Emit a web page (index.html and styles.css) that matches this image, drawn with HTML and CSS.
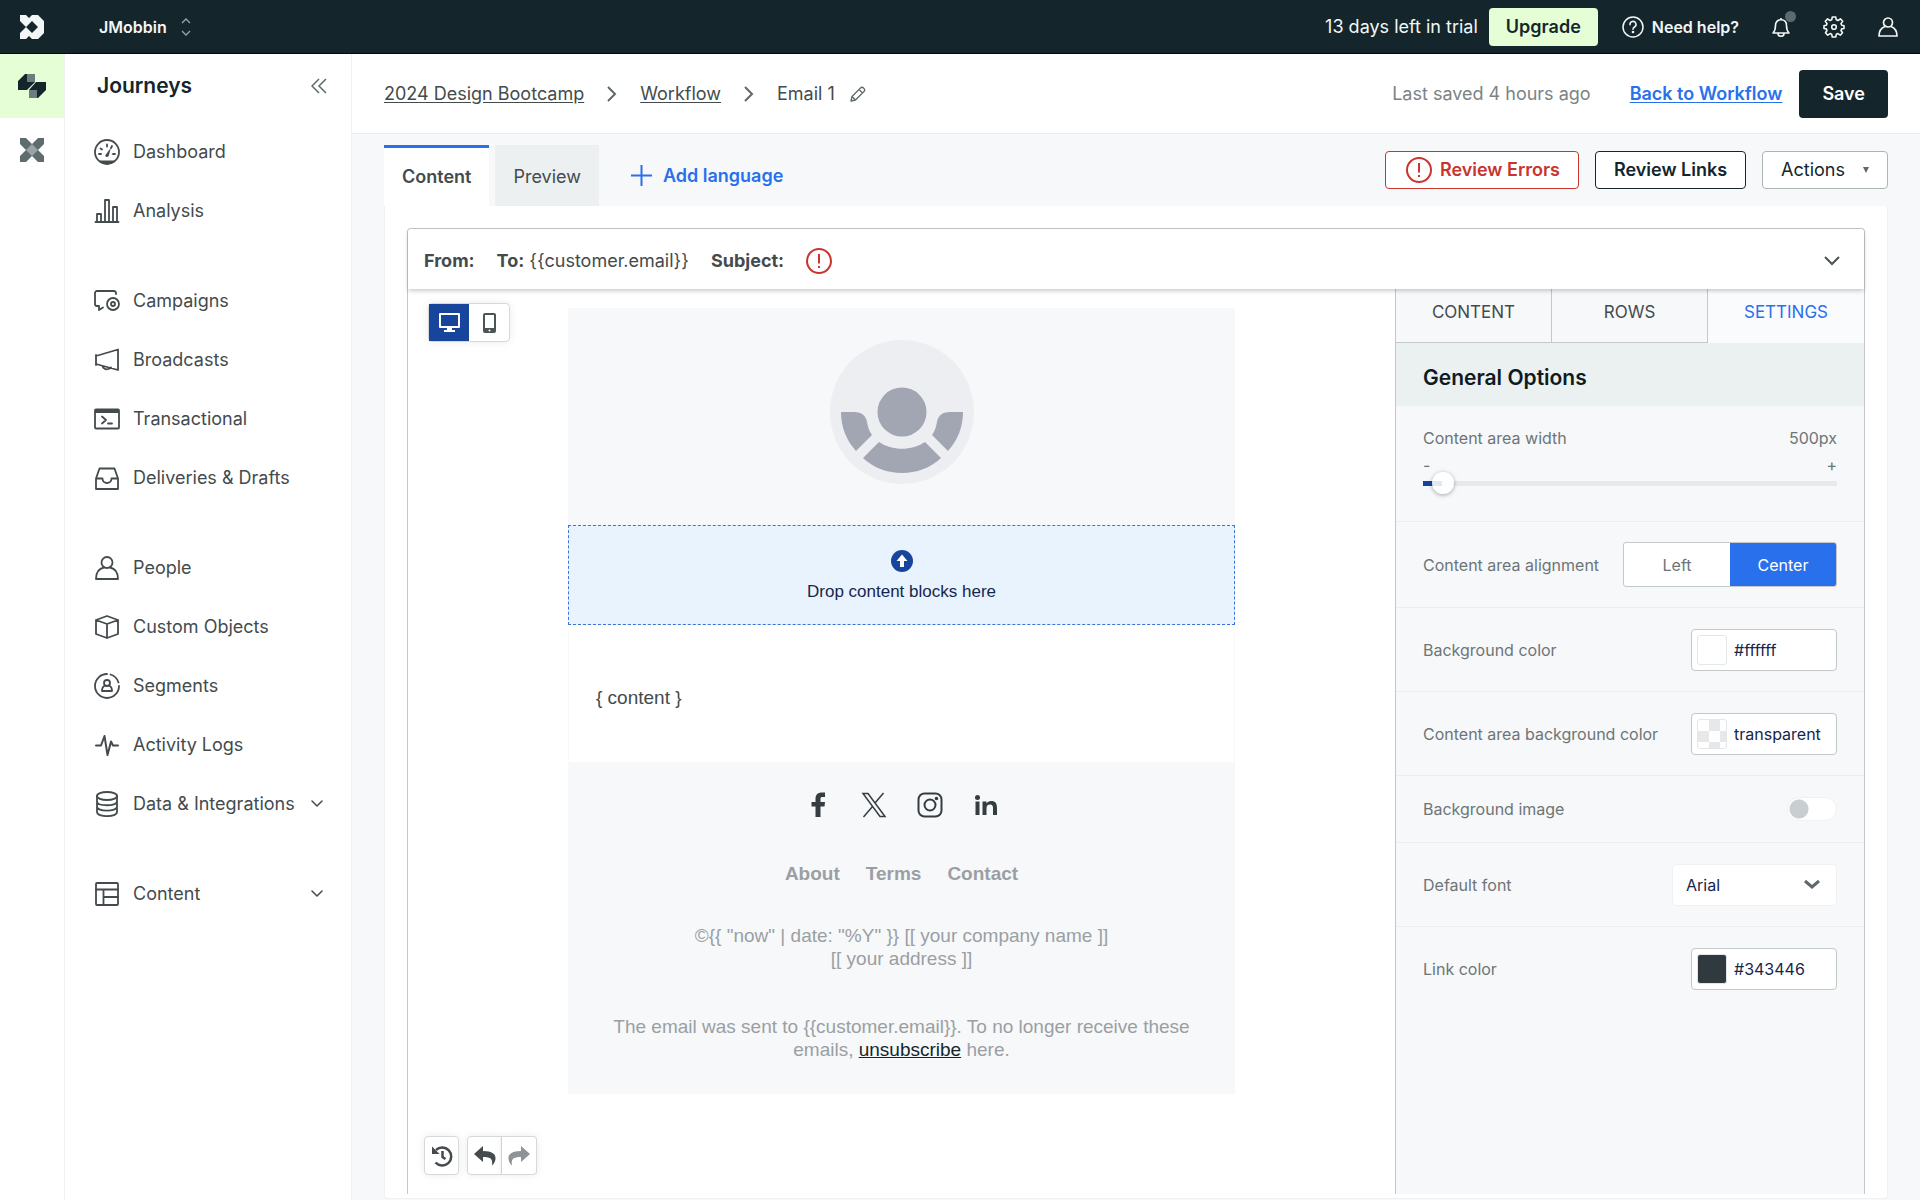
FILE: index.html
```html
<!DOCTYPE html>
<html lang="en">
    <head>
        <meta charset="utf-8">
        <meta name="viewport" content="width=device-width, initial-scale=1">
        <title>Email 1 - Journeys</title>
        <link rel="stylesheet" href="styles.css">
    </head>
    <body>
        <!-- Top bar -->
        <header class="topbar">
            <a class="logo" href="#" aria-label="Home">
                <svg width="24" height="24" viewBox="0 0 24 24"><path fill="#f3f6f6" fill-rule="evenodd" d="M0 0H6L9 3 12 0H18L24 6V18L18 24H12L9 21 6 24H0V18L6 12 0 6ZM12 6 6 12 12 18 18 12Z"/></svg>
            </a>
            <button class="workspace">JMobbin
                <svg width="10" height="18" viewBox="0 0 10 18" fill="none" stroke="#9aa5a7" stroke-width="1.300"><path d="M1 5 5 1 9 5M1 13 5 17 9 13"/></svg>
            </button>
            <div class="topbar-right">
                <span>13 days left in trial</span>
                <button class="upgrade">Upgrade</button>
                <button class="help">
                    <svg width="22" height="22" viewBox="0 0 22 22" fill="none" stroke="currentColor" stroke-width="1.500"><circle cx="11" cy="11" r="10"/><path d="M8 8.700A3 3 0 1 1 12.500 11C11.400 11.600 11 12.200 11 13.300" stroke-linecap="round"/><circle cx="11" cy="16" r=".6" fill="currentColor"/></svg>
                    Need help?
                </button>
                <button class="icon-button notifications" aria-label="Notifications">
                    <svg width="18" height="20" viewBox="0 0 18 20" fill="none" stroke="currentColor" stroke-width="1.600" stroke-linejoin="round"><path d="M1 16C3 14 3.500 12 3.500 8.500 3.500 5 5.500 2.800 9 2.800S14.500 5 14.500 8.500C14.500 12 15 14 17 16ZM9 2.800V1M6 16.500A3 2.800 0 0 0 12 16.500"/></svg>
                    <span class="dot"></span>
                </button>
                <button class="icon-button" aria-label="Settings">
                    <svg width="22" height="22" viewBox="0 0 22 22" fill="none" stroke="currentColor" stroke-width="1.600" stroke-linejoin="round"><path d="M9.300 1H12.700L13.300 3.800 15 4.500 17.400 2.900 19.700 5.200 18 7.600 18.700 9.300 21 9.800V12.500L18.700 12.900 18 14.500 19.500 16.800 17.300 19.200 14.900 17.600 13.300 18.300 12.700 21H9.300L8.700 18.300 7.100 17.600 4.700 19.200 2.500 16.800 4 14.500 3.300 12.900 1 12.500V9.800L3.300 9.300 4 7.600 2.300 5.200 4.600 2.900 7 4.500 8.700 3.800Z"/><circle cx="11" cy="11" r="2.300"/></svg>
                </button>
                <button class="icon-button" aria-label="Account">
                    <svg width="20" height="20" viewBox="0 0 20 20" fill="none" stroke="currentColor" stroke-width="1.700" stroke-linejoin="round"><circle cx="10" cy="5.500" r="4.500"/><path d="M7 9.500C3 11 1 14 1 19H19C19 14 17 11 13 9.500"/></svg>
                </button>
            </div>
        </header>

        <div class="layout">
            <!-- Product switcher -->
            <nav class="rail" aria-label="Products">
                <a class="rail-link active" href="#" aria-label="Journeys">
                    <svg width="28" height="25" viewBox="0 0 28 25"><path fill="#14262b" d="M0 7 7 0H9V8H17L9 16H0ZM18 8H28V16L20 24H19V16H11Z"/><path fill="#6e7c7d" d="M9 0H17V8H9ZM11 16H19V24H11Z"/></svg>
                </a>
                <a class="rail-link" href="#" aria-label="Data Pipelines">
                    <svg width="24" height="24" viewBox="0 0 24 24"><path fill="#5f6c6e" d="M0 0H6L12 6 18 0H24V6L18 12 24 18V24H18L12 18 6 24H0V18L6 12 0 6Z"/><path fill="#9aa4a4" d="M12 6 18 12 12 18 6 12Z"/></svg>
                </a>
            </nav>

            <!-- Sidebar -->
            <aside class="sidebar">
                <div class="sidebar-title">
                    <h2>Journeys</h2>
                    <button class="icon-button" aria-label="Collapse menu">
                        <svg width="16" height="16" viewBox="0 0 16 16" fill="none" stroke="#5f686a" stroke-width="1.500"><path d="M8 1 1 8 8 15M15 1 8 8 15 15"/></svg>
                    </button>
                </div>
                <nav class="menu" aria-label="Journeys">
                    <div class="menu-group">
                        <a href="#"><svg viewBox="0 0 26 26"><circle cx="13" cy="13" r="12"/><path class="fill" d="M5 21.500H21L17 25H9ZM11.500 16 17 8.500 14.500 17.500C12.500 18.500 10.500 17.500 11.500 16Z"/><path d="M5 15H7M19 15H21M6.500 9.500 8 10.500M13 5.500V7.500M18 7 17 9"/></svg>Dashboard</a>
                        <a href="#"><svg viewBox="0 0 26 26"><path d="M1.500 24H24.500M3 24V16H7V24M11 24V2H15V24M19 24V9H23V24"/></svg>Analysis</a>
                    </div>
                    <div class="menu-group">
                        <a href="#"><svg viewBox="0 0 26 26"><path d="M22 6V5A2 2 0 0 0 20 3H3A2 2 0 0 0 1 5V16A2 2 0 0 0 3 18H5V22L9 19.500"/><circle cx="19" cy="16" r="6"/><circle cx="19" cy="16" r="2"/></svg>Campaigns</a>
                        <a href="#"><svg viewBox="0 0 26 26"><path d="M24 2.500V23L2 17V9L24 2.500ZM2 8V18M8.500 19C9 21.500 12 23 14 22 15.500 21.500 16.500 21 17 20.500"/></svg>Broadcasts</a>
                        <a href="#"><svg viewBox="0 0 26 26"><rect x="1" y="3.500" width="24" height="19" rx="1"/><path class="fill" d="M1 3.500H25V7H1Z"/><path d="M8 10.500 12 14 8 17.500M14 17.500H18"/></svg>Transactional</a>
                        <a href="#"><svg viewBox="0 0 26 26"><path d="M2 13.500 5.500 3.500H20.500L24 13.500V24H2ZM2 13.500H8.500C8.500 19.500 17.500 19.500 17.500 13.500H24"/></svg>Deliveries &amp; Drafts</a>
                    </div>
                    <div class="menu-group">
                        <a href="#"><svg viewBox="0 0 26 26"><circle cx="13" cy="7.500" r="5.500"/><path d="M10 12.500C5 13.500 2 17 2 24H24C24 17 21 13.500 16 12.500"/></svg>People</a>
                        <a href="#"><svg viewBox="0 0 26 26"><path d="M13 2 24 6V20L13 24 2 20V6ZM2 6 13 10 24 6M13 10V24"/></svg>Custom Objects</a>
                        <a href="#"><svg viewBox="0 0 26 26"><path d="M13 1A12 12 0 1 0 25 13M16.500 1.500A12 12 0 0 1 24.500 9.500"/><circle cx="13" cy="10" r="3"/><path d="M11 12.500C8.500 13.500 8 15.500 8 18H18C18 15.500 17.500 13.500 15 12.500"/></svg>Segments</a>
                        <a href="#"><svg viewBox="0 0 26 26"><path d="M2 13.500H7L10.500 4 13.500 23 17 9.500 19 13.500H24" stroke-width="2"/></svg>Activity Logs</a>
                        <a href="#"><svg viewBox="0 0 26 26"><ellipse cx="13" cy="5" rx="10" ry="4"/><path d="M3 5V21C3 26.500 23 26.500 23 21V5M3 10.500C3 15.500 23 15.500 23 10.500M3 15.500C3 21 23 21 23 15.500"/></svg>Data &amp; Integrations<svg class="chevron" viewBox="0 0 12 8"><path d="M1 1 6 6 11 1"/></svg></a>
                    </div>
                    <div class="menu-group">
                        <a href="#"><svg viewBox="0 0 26 26"><rect x="2" y="2" width="22" height="22" rx="1"/><path d="M2 8.500H24M9.500 8.500V24M9.500 16H24"/></svg>Content<svg class="chevron" viewBox="0 0 12 8"><path d="M1 1 6 6 11 1"/></svg></a>
                    </div>
                </nav>
            </aside>

            <main class="main">
                <!-- Breadcrumbs -->
                <div class="page-header">
                    <nav class="breadcrumbs" aria-label="Breadcrumb">
                        <a href="#">2024 Design Bootcamp</a>
                        <svg width="10" height="16" viewBox="0 0 10 16" fill="none" stroke="#5f686a" stroke-width="2"><path d="M1 1 8 8 1 15"/></svg>
                        <a href="#">Workflow</a>
                        <svg width="10" height="16" viewBox="0 0 10 16" fill="none" stroke="#5f686a" stroke-width="2"><path d="M1 1 8 8 1 15"/></svg>
                        <span>Email 1</span>
                        <button class="icon-button rename" aria-label="Rename">
                            <svg width="16" height="16" viewBox="0 0 16 16" fill="none" stroke="#5f686a" stroke-width="1.300" stroke-linejoin="round"><path d="M1 15 2 10.500 10.500 2C12.500 0 16 3.500 14 5.500L5.500 14ZM9 3.500 12.500 7M2 10.500 5.500 14"/></svg>
                        </button>
                    </nav>
                    <div class="page-actions">
                        <span class="saved">Last saved 4 hours ago</span>
                        <a class="back" href="#">Back to Workflow</a>
                        <button class="save">Save</button>
                    </div>
                </div>

                <div class="workspace-area">
                    <div class="tabs-row">
                        <div class="tabs">
                            <button class="tab active">Content</button>
                            <button class="tab">Preview</button>
                            <button class="add-language">
                                <svg width="21" height="21" viewBox="0 0 21 21" fill="none" stroke="currentColor" stroke-width="2"><path d="M10.500 0V21M0 10.500H21"/></svg>
                                Add language
                            </button>
                        </div>
                        <div class="reviews">
                            <button class="outline error">
                                <svg width="26" height="26" viewBox="0 0 26 26" fill="none" stroke="currentColor" stroke-width="2"><circle cx="13" cy="13" r="12"/><path d="M13 6V15.500M13 18V20"/></svg>
                                Review Errors
                            </button>
                            <button class="outline">Review Links</button>
                            <button class="outline actions">Actions <svg width="6" height="6" viewBox="0 0 6 6"><path fill="#5f686a" d="M0 0H6L3 6Z"/></svg></button>
                        </div>
                    </div>

                    <div class="panel">
                        <div class="editor">
                            <!-- Envelope -->
                            <div class="envelope">
                                <strong>From:</strong>
                                <span><strong>To:</strong> {{customer.email}}</span>
                                <strong>Subject:</strong>
                                <svg width="26" height="26" viewBox="0 0 26 26" fill="none" stroke="#c9352c" stroke-width="2"><circle cx="13" cy="13" r="12"/><path d="M13 6V15.500M13 18V20"/></svg>
                                <button class="icon-button expand" aria-label="Show envelope">
                                    <svg width="16" height="10" viewBox="0 0 16 10" fill="none" stroke="#4b5456" stroke-width="2"><path d="M1 1 8 8 15 1"/></svg>
                                </button>
                            </div>

                            <div class="editor-body">
                                <!-- Email canvas -->
                                <section class="canvas">
                                    <div class="device-switch">
                                        <button class="active" aria-label="Desktop">
                                            <svg width="21" height="19" viewBox="0 0 21 19"><path fill="none" stroke="#fff" stroke-width="2" stroke-linejoin="round" d="M1 1H20V14H1Z"/><path fill="#fff" d="M8 14H13V17H16V19H5V17H8Z"/></svg>
                                        </button>
                                        <button aria-label="Mobile">
                                            <svg width="13" height="20" viewBox="0 0 13 20"><rect x="1" y="1" width="11" height="18" rx="1" fill="none" stroke="#4b5456" stroke-width="2"/><path fill="#4b5456" d="M1 15H12V19H1Z"/><circle cx="6.500" cy="17.500" r="1" fill="#fff"/></svg>
                                        </button>
                                    </div>

                                    <div class="email">
                                        <div class="email-header">
                                            <svg width="144" height="144" viewBox="0 0 144 144"><circle cx="72" cy="72" r="72" fill="#edeef2"/><g fill="#a2a5b2"><circle cx="72" cy="72" r="24.500"/><path d="M11 72H24C32 72 36 76 37 82 38 87 39 91 42 95L26 111C17 101 11 88 11 72ZM133 72H120C112 72 108 76 107 82 106 87 105 91 102 95L118 111C127 101 133 88 133 72ZM49 102C62 111 82 111 95 102L111 118C90 138 54 138 33 118Z"/></g></svg>
                                        </div>
                                        <div class="drop-zone">
                                            <svg width="22" height="22" viewBox="0 0 22 22"><circle cx="11" cy="11" r="11" fill="#17459b"/><path fill="#fff" d="M11 4.500 16.500 11H13V17H9V11H5.500Z"/></svg>
                                            <span>Drop content blocks here</span>
                                        </div>
                                        <div class="email-content">{ content }</div>
                                        <div class="email-footer">
                                            <div class="social">
                                                <a href="#" aria-label="Facebook"><svg viewBox="0 0 26 26"><path fill="#353d40" d="M10.500 25V14.500H6.500V10H10.500V7C10.500 2.500 13 .5 17 .5H20V5H17.500C16 5 15.500 5.500 15.500 7V10H20L19.500 14.500H15.500V25Z"/></svg></a>
                                                <a href="#" aria-label="X"><svg viewBox="0 0 26 26" fill="none" stroke="#353d40" stroke-width="1.500"><path d="M2 1.500H7L24 24.500H19ZM22.500 1 14 11M11.500 14.500 2.500 25"/></svg></a>
                                                <a href="#" aria-label="Instagram"><svg viewBox="0 0 26 26" fill="none" stroke="#353d40" stroke-width="2"><rect x="1.500" y="1.500" width="23" height="23" rx="6"/><circle cx="13" cy="13" r="5.500"/><circle cx="19.500" cy="6.500" r=".8" fill="#353d40"/></svg></a>
                                                <a href="#" aria-label="LinkedIn"><svg viewBox="0 0 26 26" fill="#353d40"><circle cx="4.500" cy="5.500" r="2.500"/><path d="M2.500 9.500H6.500V23H2.500ZM9.500 9.500H13.500V11.500C14.500 10 16 9 18 9 22.500 9 24 11.500 24 16V23H20V16.500C20 14 19.500 12.500 17 12.500 14.500 12.500 13.500 14 13.500 16.500V23H9.500Z"/></svg></a>
                                            </div>
                                            <div class="footer-links">
                                                <a href="#">About</a>
                                                <a href="#">Terms</a>
                                                <a href="#">Contact</a>
                                            </div>
                                            <p>©{{ "now" | date: "%Y" }} [[ your company name ]]<br>[[ your address ]]</p>
                                            <p>The email was sent to {{customer.email}}. To no longer receive these emails, <a href="#">unsubscribe</a> here.</p>
                                        </div>
                                    </div>

                                    <div class="history">
                                        <button aria-label="History">
                                            <svg width="22" height="22" viewBox="0 0 22 22" fill="none" stroke="#434b4d" stroke-width="2.500"><path d="M5 5A9 9 0 1 1 4.500 17.500M11.500 6V12L14.500 14"/><path fill="#434b4d" stroke="none" d="M1 1.500V9H8.500Z"/></svg>
                                        </button>
                                        <div class="undo-group">
                                            <button aria-label="Undo"><svg width="22" height="20" viewBox="0 0 22 20"><path fill="#434b4d" d="M0 8 9 0V5C18 5 22 8 21.500 13 21 16 20 18 18 19.500 19 13 17 11 9 11V16Z"/></svg></button>
                                            <button aria-label="Redo" disabled><svg width="22" height="20" viewBox="0 0 22 20"><path fill="#8d9396" d="M22 8 13 0V5C4 5 0 8 .5 13 1 16 2 18 4 19.500 3 13 5 11 13 11V16Z"/></svg></button>
                                        </div>
                                    </div>
                                </section>

                                <!-- Settings -->
                                <section class="settings">
                                    <div class="settings-tabs">
                                        <button>CONTENT</button>
                                        <button>ROWS</button>
                                        <button class="active">SETTINGS</button>
                                    </div>
                                    <h3>General Options</h3>
                                    <div class="option option-width">
                                        <div class="option-line"><label for="areaWidth">Content area width</label><output for="areaWidth">500px</output></div>
                                        <div class="option-line signs"><span>-</span><span>+</span></div>
                                        <input type="range" id="areaWidth" min="480" max="1400" value="500">
                                    </div>
                                    <div class="option option-align">
                                        <span>Content area alignment</span>
                                        <div class="segmented">
                                            <button>Left</button>
                                            <button class="active">Center</button>
                                        </div>
                                    </div>
                                    <div class="option">
                                        <label for="bgColor">Background color</label>
                                        <div class="color-field"><span class="swatch"></span><input type="text" id="bgColor" value="#ffffff"></div>
                                    </div>
                                    <div class="option">
                                        <label for="areaColor">Content area background color</label>
                                        <div class="color-field"><span class="swatch checkered"></span><input type="text" id="areaColor" value="transparent"></div>
                                    </div>
                                    <div class="option option-image">
                                        <label for="bgImage">Background image</label>
                                        <input type="checkbox" class="toggle" id="bgImage">
                                    </div>
                                    <div class="option">
                                        <label for="defaultFont">Default font</label>
                                        <div class="select-field">
                                            <select id="defaultFont"><option>Arial</option></select>
                                            <svg width="16" height="11" viewBox="0 0 16 11" fill="none" stroke="#5f6a6d" stroke-width="3"><path d="M1 2 8 8 15 2"/></svg>
                                        </div>
                                    </div>
                                    <div class="option">
                                        <label for="linkColor">Link color</label>
                                        <div class="color-field"><span class="swatch dark"></span><input type="text" id="linkColor" value="#343446"></div>
                                    </div>
                                </section>
                            </div>
                        </div>
                    </div>
                </div>
            </main>
        </div>
    </body>
</html>
```
FILE: styles.css
```css
/* General */
* {
    box-sizing: border-box;
}

body {
    margin: 0;
    min-height: 100vh;
    display: flex;
    flex-direction: column;
    font-family: Inter, "Liberation Sans", sans-serif;
    font-size: 19px;
    line-height: 24px;
    color: #434b4d;
    background-color: #fff;
}

button,
input,
select {
    font: inherit;
    color: inherit;
}

button {
    margin: 0;
    padding: 0;
    border: none;
    background: none;
    cursor: pointer;
}

a {
    color: inherit;
}

svg {
    display: block;
    flex: none;
}

.icon-button {
    display: flex;
    align-items: center;
    justify-content: center;
}

/* Top bar */
.topbar {
    display: flex;
    align-items: center;
    height: 54px;
    padding: 0 22px 0 20px;
    background-color: #14262b;
    border-bottom: 1px solid #04090c;
    color: #f3f6f6;
}

.workspace {
    display: flex;
    align-items: center;
    gap: 14px;
    margin-left: 55px;
    font-size: 16px;
    font-weight: 600;
}

.topbar-right {
    display: flex;
    align-items: center;
    margin-left: auto;
    font-size: 18px;
}

.upgrade {
    height: 38px;
    padding: 0 17px;
    margin: 0 24px 0 11px;
    border-radius: 4px;
    background-color: #e5fed6;
    color: #14262b;
    font-weight: 600;
}

.help {
    display: flex;
    align-items: center;
    gap: 8px;
    font-size: 16px;
    font-weight: 600;
}

.topbar-right .icon-button {
    margin-left: 33px;
}

.notifications {
    position: relative;
}

.dot {
    position: absolute;
    top: -6px;
    right: -6px;
    width: 11px;
    height: 11px;
    border-radius: 50%;
    background-color: #5c6b6e;
}

/* Layout */
.layout {
    display: flex;
    flex: 1;
}

.rail {
    width: 65px;
    border-right: 1px solid #eef0f2;
}

.rail-link {
    display: flex;
    align-items: center;
    justify-content: center;
    height: 64px;
}

.rail-link.active {
    background-color: #e5fed6;
}

/* Sidebar */
.sidebar {
    width: 287px;
    border-right: 1px solid #eef0f2;
}

.sidebar-title {
    display: flex;
    align-items: center;
    justify-content: space-between;
    height: 64px;
    padding: 0 24px 0 32px;
}

.sidebar-title h2 {
    margin: 0;
    font-size: 21px;
    font-weight: 600;
    color: #14262b;
}

.menu {
    display: flex;
    flex-direction: column;
    gap: 31px;
    padding-top: 4px;
}

.menu-group a {
    display: flex;
    align-items: center;
    gap: 13px;
    height: 59px;
    padding: 0 28px 0 29px;
    font-size: 18px;
    white-space: nowrap;
    text-decoration: none;
}

.menu-group svg {
    width: 26px;
    height: 26px;
    fill: none;
    stroke: #434b4d;
    stroke-width: 1.8;
    stroke-linejoin: round;
    stroke-linecap: round;
}

.menu-group .fill {
    fill: #434b4d;
    stroke: none;
}

.menu-group .chevron {
    width: 12px;
    height: 8px;
    margin-left: auto;
    stroke-width: 1.5;
}

/* Page header */
.main {
    flex: 1;
    min-width: 0;
    display: flex;
    flex-direction: column;
}

.page-header {
    display: flex;
    align-items: center;
    justify-content: space-between;
    height: 80px;
    padding: 0 32px;
    border-bottom: 1px solid #ebeef0;
    font-size: 18px;
}

.breadcrumbs,
.page-actions {
    display: flex;
    align-items: center;
}

.breadcrumbs {
    gap: 23px;
}

.breadcrumbs a,
.back {
    text-underline-offset: 2px;
}

.breadcrumbs .rename {
    margin-left: -8px;
}

.saved {
    color: #7b8385;
}

.back {
    margin: 0 17px 0 39px;
    color: #2970ed;
    font-weight: 600;
}

.save {
    height: 48px;
    padding: 0 23px;
    border-radius: 4px;
    background-color: #14262b;
    color: #fff;
    font-weight: 600;
}

/* Tabs */
.workspace-area {
    flex: 1;
    display: flex;
    flex-direction: column;
    padding: 11px 32px 1px;
    background-color: #f6f8fa;
}

.tabs-row,
.tabs,
.reviews {
    display: flex;
}

.tabs-row {
    justify-content: space-between;
}

.tabs {
    align-items: center;
    gap: 6px;
}

.tab {
    height: 61px;
    padding: 0 18px;
    border-top: 3px solid #edf0f1;
    background-color: #edf0f1;
    font-size: 18px;
}

.tab.active {
    border-top-color: #2970ed;
    background-color: #fff;
    font-weight: 600;
}

.add-language {
    display: flex;
    align-items: center;
    gap: 11px;
    margin-left: 26px;
    color: #2970ed;
    font-size: 18px;
    font-weight: 600;
}

.reviews {
    gap: 16px;
    padding-top: 6px;
}

.outline {
    display: flex;
    align-items: center;
    gap: 8px;
    height: 38px;
    padding: 0 18px;
    border: 1px solid #14262b;
    border-radius: 4px;
    background-color: #fff;
    color: #14262b;
    font-size: 18px;
    font-weight: 600;
}

.outline.error {
    padding-left: 20px;
    border-color: #c9352c;
    color: #c9352c;
}

.outline.actions {
    gap: 18px;
    border-color: #aeb4b6;
    font-weight: 400;
}

/* Editor */
.panel {
    flex: 1;
    display: flex;
    padding: 22px;
    padding-bottom: 4px;
    border: 1px solid #eff1f3;
    border-top: none;
    border-radius: 0 4px 4px 4px;
    background-color: #fff;
}

.editor {
    flex: 1;
    display: flex;
    flex-direction: column;
    border: 1px solid #c3c8ca;
    border-bottom: none;
    border-radius: 4px 4px 0 0;
}

.envelope {
    position: relative;
    display: flex;
    align-items: center;
    gap: 22px;
    height: 60px;
    padding: 4px 24px 0 16px;
    border-radius: 4px 4px 0 0;
    background-color: #fff;
    box-shadow: 0 2px 4px rgba(0, 0, 0, 0.2);
    font-size: 18px;
}

.envelope strong {
    font-weight: 700;
}

.expand {
    margin-left: auto;
}

.editor-body {
    flex: 1;
    display: flex;
}

.canvas {
    position: relative;
    flex: 1;
    display: flex;
    justify-content: center;
    align-items: flex-start;
    padding: 19px 16px;
}

/* Floating tools over the canvas */
.device-switch,
.history,
.undo-group {
    display: flex;
}

.device-switch {
    position: absolute;
    top: 14px;
    left: 20px;
    border: 1px solid #d5d9da;
    border-radius: 4px;
    box-shadow: 0 0 8px rgba(0, 0, 0, 0.08);
}

.device-switch button {
    display: flex;
    align-items: center;
    justify-content: center;
    width: 40px;
    height: 37px;
}

.device-switch .active {
    background-color: #17459b;
}

.history {
    position: absolute;
    bottom: 19px;
    left: 16px;
    gap: 8px;
}

.history button {
    display: flex;
    align-items: center;
    justify-content: center;
    width: 35px;
    height: 39px;
    border: 1px solid #d5d9da;
    border-radius: 4px;
    background-color: #fff;
    box-shadow: 0 0 8px rgba(0, 0, 0, 0.08);
}

.history .undo-group button {
    border-radius: 4px 0 0 4px;
}

.history .undo-group button + button {
    border-left: none;
    border-radius: 0 4px 4px 0;
}

/* Email */
.email {
    width: 667px;
    font-family: "Liberation Sans", Arial, sans-serif;
    line-height: 23px;
}

.email-header {
    display: flex;
    justify-content: center;
    padding: 32px 0 41px;
    background-color: #f6f8fa;
}

.drop-zone {
    display: flex;
    flex-direction: column;
    align-items: center;
    justify-content: center;
    gap: 8px;
    height: 100px;
    padding-top: 3px;
    border: 1px dashed #3a75dc;
    background-color: #e8f3fd;
    color: #17264d;
    font-size: 17px;
}

.email-content {
    margin-top: 8px;
    padding: 53px 27px;
    border: 1px solid #f6f8fa;
    border-top: none;
}

.email-footer {
    padding: 29px 40px 33px;
    background-color: #f6f8fa;
    color: #9b9fa3;
    text-align: center;
}

.social,
.footer-links {
    display: flex;
    justify-content: center;
}

.social {
    gap: 30px;
}

.social svg {
    width: 26px;
    height: 26px;
}

.footer-links {
    gap: 26px;
    margin-top: 44px;
    font-weight: 700;
}

.footer-links a {
    text-decoration: none;
}

.email-footer p {
    margin: 39px 0 0;
}

.email-footer p + p {
    margin-top: 45px;
}

.email-footer p a {
    color: #14262b;
}

/* Settings panel */
.settings {
    width: 469px;
    border-left: 1px solid #c3c8ca;
    background-color: #f6f8fa;
    font-size: 16px;
    color: #6d7577;
}

.settings-tabs {
    display: grid;
    grid-template-columns: repeat(3, 1fr);
    height: 54px;
}

.settings-tabs button {
    padding-bottom: 8px;
    border-right: 1px solid #c3c8ca;
    border-bottom: 1px solid #c3c8ca;
    color: #434b4d;
    font-size: 17px;
}

.settings-tabs .active {
    border: none;
    background-color: #fafbfc;
    color: #2970ed;
}

.settings h3 {
    margin: 0;
    padding: 23px 27px 16px;
    background-color: #ebf0f1;
    color: #0f1b1f;
    font-size: 21px;
    font-weight: 600;
}

.option {
    display: flex;
    align-items: center;
    justify-content: space-between;
    height: 84px;
    padding: 0 27px;
    border-top: 1px solid #ebedef;
}

.option-width {
    flex-direction: column;
    align-items: stretch;
    justify-content: flex-start;
    height: 115px;
    padding-top: 20px;
    border-top: none;
}

.option-align {
    height: 86px;
}

.option-image {
    height: 67px;
}

.option-line {
    display: flex;
    justify-content: space-between;
}

.option-line.signs {
    margin-top: 6px;
    line-height: 18px;
}

#areaWidth {
    appearance: none;
    width: 100%;
    height: 22px;
    margin: -2px 0 0;
    background: linear-gradient(#e7e9ea, #e7e9ea) center / 100% 5px no-repeat;
}

#areaWidth::-webkit-slider-runnable-track {
    height: 22px;
    background: linear-gradient(#17459b, #17459b) left center / 19px 5px no-repeat;
}

#areaWidth::-webkit-slider-thumb {
    appearance: none;
    width: 22px;
    height: 22px;
    border-radius: 50%;
    background-color: rgba(255, 255, 255, 0.88);
    box-shadow: 0 1px 4px rgba(0, 0, 0, 0.35);
}

.segmented {
    display: grid;
    grid-template-columns: 1fr 1fr;
    width: 214px;
    height: 45px;
    border: 1px solid #c3c8ca;
    border-radius: 3px;
    overflow: hidden;
    background-color: #fff;
}

.segmented .active {
    background-color: #2970ed;
    color: #fff;
}

.color-field {
    display: flex;
    align-items: center;
    gap: 7px;
    width: 146px;
    height: 42px;
    padding: 0 5px;
    border: 1px solid #c3c8ca;
    border-radius: 4px;
    background-color: #fff;
}

.color-field input {
    min-width: 0;
    width: 100%;
    padding: 0;
    border: none;
    background: none;
    color: #17264d;
}

.swatch {
    flex: none;
    width: 30px;
    height: 30px;
    border: 1px solid #e3e5e7;
    border-radius: 3px;
    background-color: #fff;
}

.swatch.checkered {
    background: repeating-conic-gradient(#e6e8e9 0 25%, #fff 0 50%) -11px -11px / 22px 22px;
}

.swatch.dark {
    background-color: #30393d;
}

.toggle {
    appearance: none;
    width: 50px;
    height: 24px;
    margin: 0;
    border: 1px solid #eff1f2;
    border-radius: 12px;
    background: radial-gradient(circle at 11px 11px, #c9cfd0 9px, #fff 10px);
}

.select-field {
    display: grid;
    align-items: center;
}

.select-field > * {
    grid-area: 1 / 1;
}

.select-field select {
    appearance: none;
    width: 165px;
    height: 42px;
    padding: 0 13px;
    border: 1px solid #eff1f2;
    border-radius: 4px;
    background-color: #fff;
    color: #17264d;
}

.select-field svg {
    justify-self: end;
    margin-right: 17px;
    pointer-events: none;
}
```
